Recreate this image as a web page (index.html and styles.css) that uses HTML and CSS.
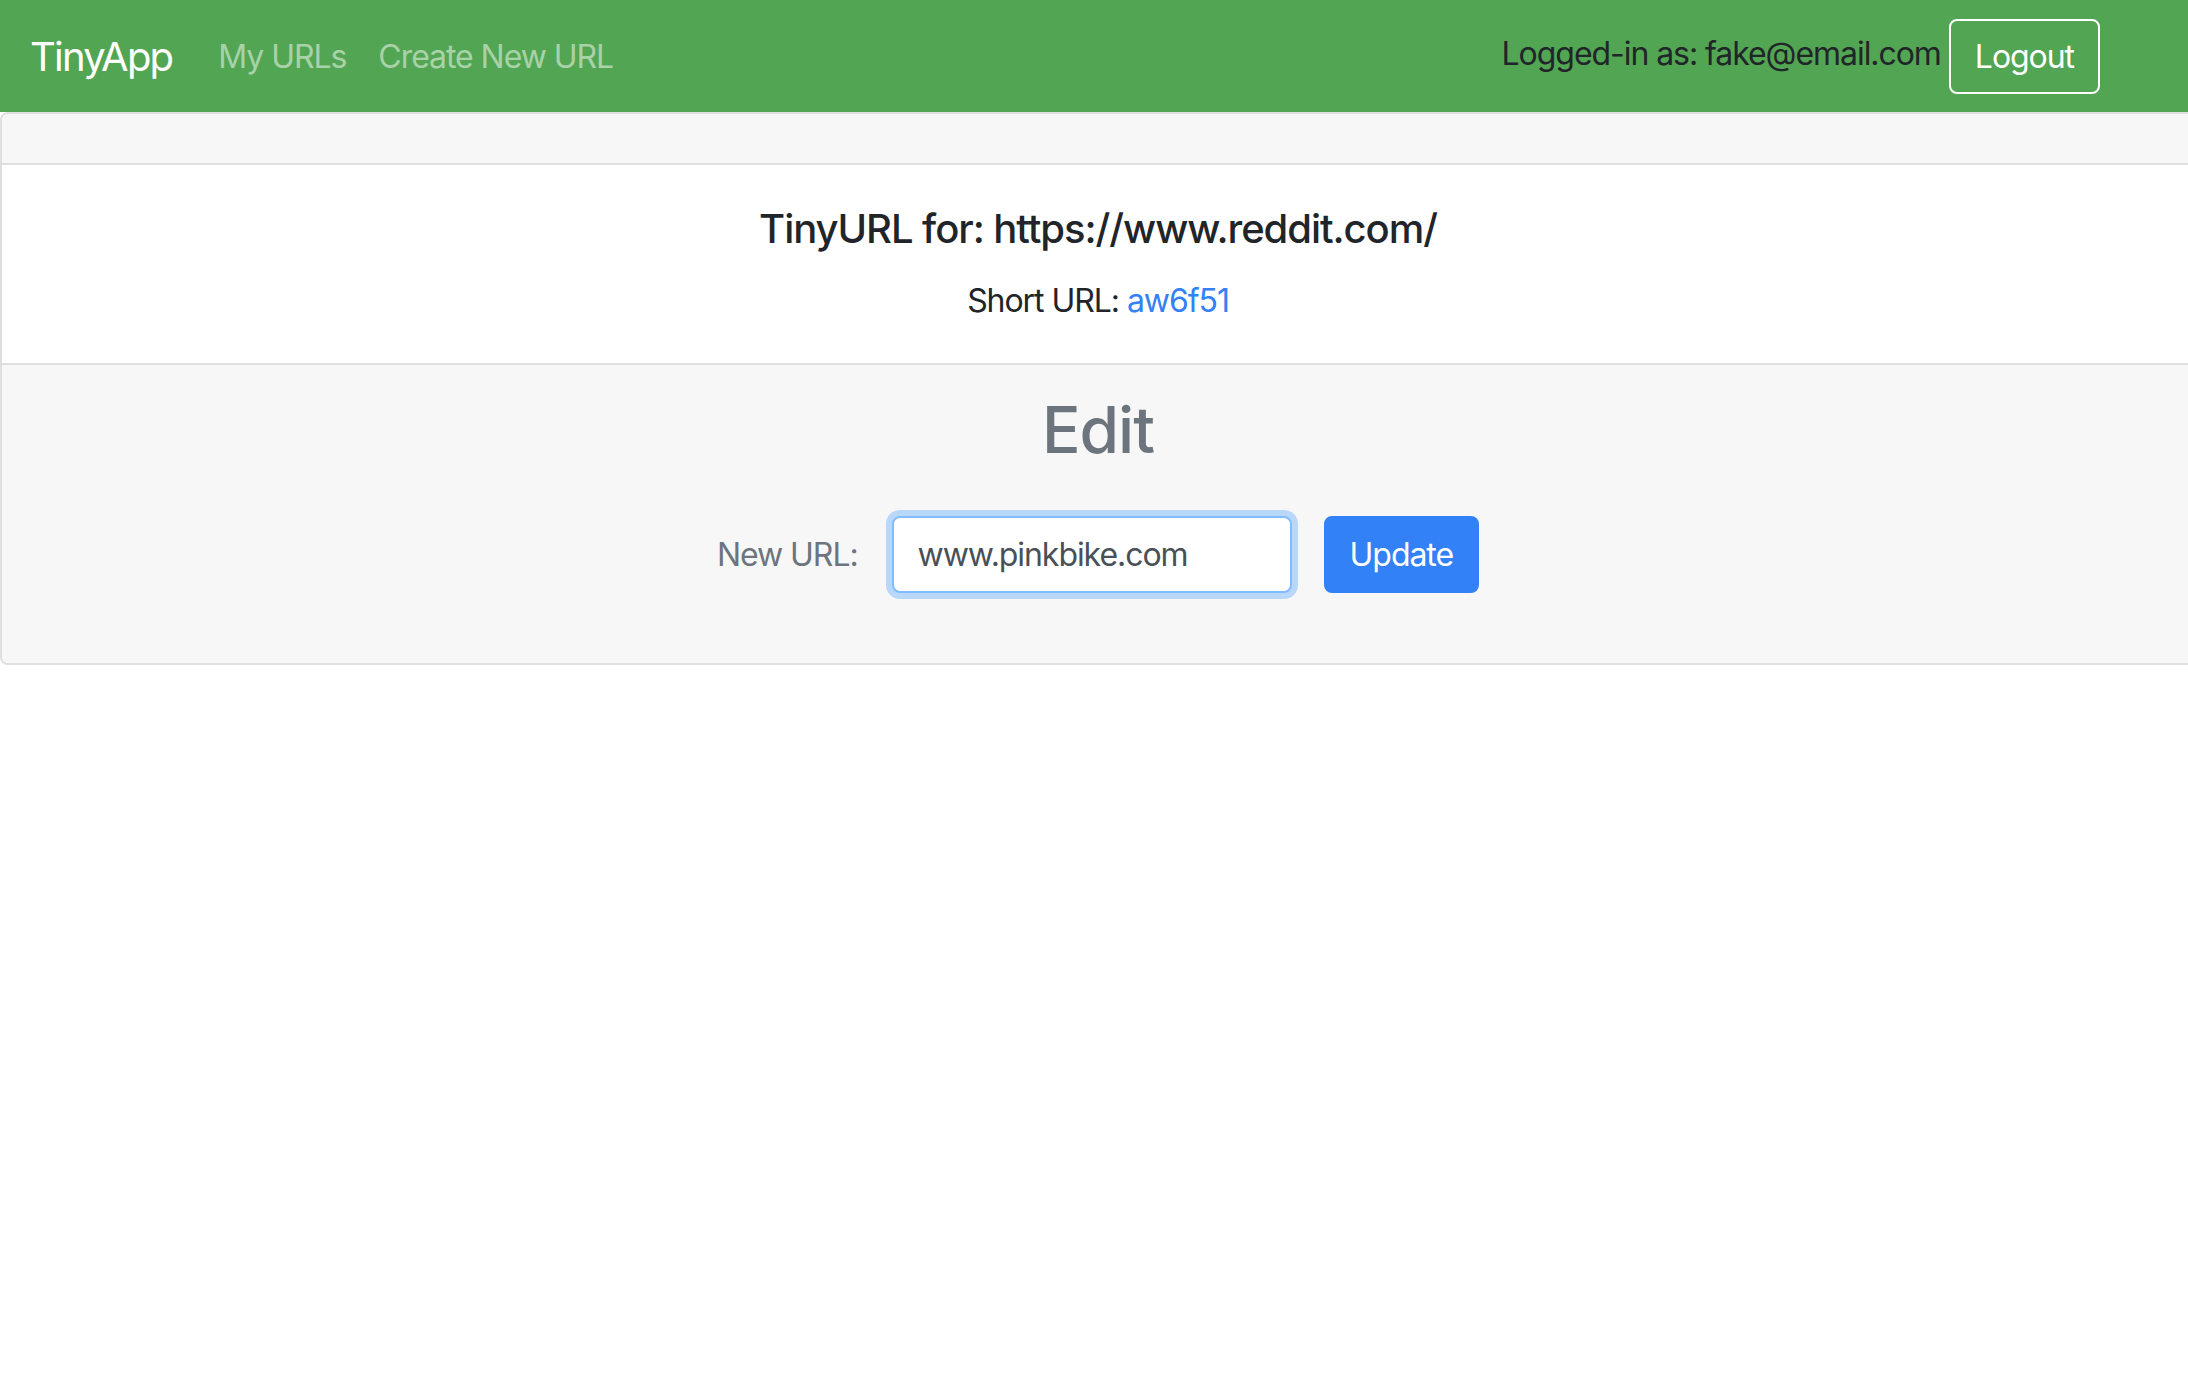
FILE: index.html
```html
<!DOCTYPE html>
<html lang="en">
<head>
<meta charset="utf-8">
<title>TinyApp</title>
<link rel="stylesheet" href="styles.css">
</head>
<body>
<nav class="navbar">
  <a class="brand" href="#">TinyApp</a>
  <div class="nav-links">
    <a class="nav-link" href="#">My URLs</a>
    <a class="nav-link" href="#">Create New URL</a>
  </div>
  <div class="nav-right">
    <span class="nav-text">Logged-in as: fake@email.com</span>
    <button class="btn-logout" type="button">Logout</button>
  </div>
</nav>
<main class="card">
  <div class="card-header"></div>
  <div class="card-body">
    <h5 class="card-title">TinyURL for: https://www.reddit.com/</h5>
    <p class="card-text">Short URL: <a class="link" href="#">aw6f51</a></p>
  </div>
  <div class="card-footer">
    <h2 class="edit-title">Edit</h2>
    <form class="edit-form">
      <label class="form-label" for="newurl">New URL:</label>
      <input class="form-input" id="newurl" type="text" value="www.pinkbike.com">
      <button class="btn-primary" type="button">Update</button>
    </form>
  </div>
</main>
</body>
</html>
```
FILE: styles.css
```css
* { box-sizing: border-box; }
html, body { margin: 0; padding: 0; }
html { overflow-x: hidden; }
body {
  font-family: Inter, "Noto Sans", "Liberation Sans", sans-serif;
  font-size: 32px;
  line-height: 1.5;
  letter-spacing: -0.033em;
  color: #212529;
  background: #fff;
}
.navbar {
  height: 112px;
  background: #52a552;
  display: flex;
  align-items: center;
  padding: 0 88px 0 30px;
}
.brand {
  font-size: 40px;
  line-height: 60px;
  letter-spacing: -0.045em;
  color: #fff;
  text-decoration: none;
  margin-right: 30px;
  margin-top: 2px;
}
.nav-links { display: flex; margin-top: 2px; }
.nav-link {
  color: rgba(255,255,255,.5);
  text-decoration: none;
  padding: 0 16px;
  line-height: 48px;
}
.nav-right {
  margin-left: auto;
  display: flex;
  align-items: center;
}
.nav-text {
  color: #212529;
  margin-right: 8px;
  margin-top: -4px;
}
.btn-logout {
  font-family: inherit;
  font-size: 32px;
  letter-spacing: inherit;
  line-height: 48px;
  color: #fff;
  background: transparent;
  border: 2px solid #fff;
  border-radius: 8px;
  padding: 12px 24px;
  height: 75px;
}
.card {
  display: block;
  border: 2px solid #dfdfdf;
  border-radius: 8px;
  margin-right: -8px;
  overflow: hidden;
}
.card-header {
  height: 51px;
  background: #f7f7f7;
  border-bottom: 2px solid #dfdfdf;
}
.card-body {
  text-align: center;
  padding: 40px 40px 38px;
}
.card-title {
  font-size: 40px;
  font-weight: 500;
  line-height: 48px;
  margin: 0 0 24px;
}
.card-text { margin: 0; line-height: 48px; }
.link { color: #3381f6; text-decoration: none; }
.card-footer {
  background: #f7f7f7;
  border-top: 2px solid #dfdfdf;
  text-align: center;
  padding: 26px 0 70px;
}
.edit-title {
  font-size: 64px;
  font-weight: 500;
  line-height: 77px;
  color: #6c757d;
  margin: 0 0 48px;
}
.edit-form {
  display: flex;
  justify-content: center;
  align-items: center;
}
.form-label {
  color: #6c757d;
  margin-right: 34px;
}
.form-input {
  width: 400px;
  height: 77px;
  font-family: inherit;
  font-size: 32px;
  letter-spacing: inherit;
  color: #495057;
  background: #fff;
  border: 2px solid #80bdff;
  border-radius: 8px;
  padding: 12px 24px;
  box-shadow: 0 0 0 6px rgba(0,123,255,.25);
  outline: none;
  margin-right: 32px;
}
.btn-primary {
  font-family: inherit;
  font-size: 32px;
  letter-spacing: inherit;
  color: #fff;
  background: #3381f6;
  border: 2px solid #3381f6;
  border-radius: 8px;
  height: 77px;
  padding: 0 24px;
}
```
